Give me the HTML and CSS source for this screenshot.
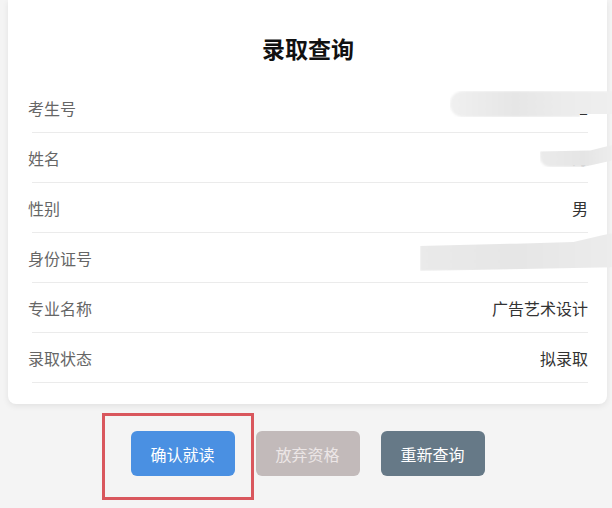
FILE: index.html
```html
<!DOCTYPE html>
<html lang="zh-CN">
<head>
<meta charset="utf-8">
<title>录取查询</title>
<link rel="stylesheet" href="styles.css">
</head>
<body>
<div class="page">
  <section class="card">
    <h1 class="title">录取查询</h1>
    <div class="row">
      <span class="label">考生号</span>
      <span class="value">2</span>
      <span class="smudge smudge-id"></span>
    </div>
    <div class="row">
      <span class="label">姓名</span>
      <span class="value">为</span>
      <span class="smudge smudge-name"></span>
    </div>
    <div class="row">
      <span class="label">性别</span>
      <span class="value">男</span>
    </div>
    <div class="row">
      <span class="label">身份证号</span>
      <span class="value"></span>
      <span class="smudge smudge-card"></span>
    </div>
    <div class="row">
      <span class="label">专业名称</span>
      <span class="value">广告艺术设计</span>
    </div>
    <div class="row">
      <span class="label">录取状态</span>
      <span class="value">拟录取</span>
    </div>
  </section>
  <div class="actions">
    <button class="btn btn-confirm">确认就读</button>
    <button class="btn btn-give-up">放弃资格</button>
    <button class="btn btn-requery">重新查询</button>
    <span class="highlight"></span>
  </div>
</div>
</body>
</html>
```

FILE: styles.css
```css
html, body {
  margin: 0;
  padding: 0;
  background: #f4f4f4;
  font-family: "Noto Sans CJK SC", "Microsoft YaHei", sans-serif;
  overflow: hidden;
}

.page {
  width: 612px;
  height: 508px;
  padding: 0 5px 0 8px;
  box-sizing: border-box;
}

.card {
  background: #fff;
  border-radius: 0 0 8px 8px;
  box-shadow: 0 2px 6px rgba(0, 0, 0, 0.08);
  padding: 32px 19px 21px 20px;
}

.title {
  margin: 0 0 19px;
  text-align: center;
  font-size: 23px;
  line-height: 32px;
  font-weight: 700;
  color: #111;
}

.row {
  position: relative;
  height: 50px;
  display: flex;
  align-items: center;
  justify-content: space-between;
  background-image: linear-gradient(#ebebeb, #ebebeb);
  background-repeat: no-repeat;
  background-size: calc(100% - 4px) 1px;
  background-position: 4px 100%;
}

.label {
  font-size: 16px;
  color: #666;
}

.value {
  font-size: 16px;
  color: #333;
}

.smudge {
  position: absolute;
  filter: blur(1.2px);
}

.smudge-id {
  left: 422px;
  top: 8px;
  width: 162px;
  height: 26px;
  border-radius: 13px 0 0 13px;
  background: linear-gradient(90deg, #f0f0f0 0%, #ebebeb 20%, #e6e6e6 40%, #ececec 70%, #efefef 100%);
  clip-path: polygon(0 0, 100% 0, 100% 88%, 80% 88%, 80% 100%, 0 100%);
}

.smudge-name {
  left: 512px;
  top: 12px;
  width: 72px;
  height: 22px;
  border-radius: 6px 0 0 10px;
  background: linear-gradient(90deg, #ebebeb, #e5e5e5 60%, #ededed);
  clip-path: polygon(0 30%, 70% 25%, 100% 0, 100% 70%, 60% 100%, 0 100%);
}

.smudge-card {
  left: 392px;
  top: 0;
  width: 192px;
  height: 38px;
  background: linear-gradient(90deg, #eaeaea, #e6e6e6 50%, #ececec);
  clip-path: polygon(0 34%, 50% 28%, 80% 24%, 100% 0, 100% 90%, 0 100%);
}

.actions {
  position: relative;
  display: flex;
  justify-content: center;
  gap: 21px;
  margin-top: 27px;
}

.btn {
  width: 104px;
  height: 45px;
  border: 0;
  border-radius: 6px;
  font-family: inherit;
  font-size: 16px;
  color: #fff;
  padding: 0;
}

.btn-confirm {
  background: #4a90e2;
}

.btn-give-up {
  background: #c2baba;
  color: #ece6e6;
}

.btn-requery {
  background: #667987;
}

.highlight {
  position: absolute;
  left: 94px;
  top: -18px;
  width: 146px;
  height: 81px;
  border: 3px solid #d9575d;
}
```
